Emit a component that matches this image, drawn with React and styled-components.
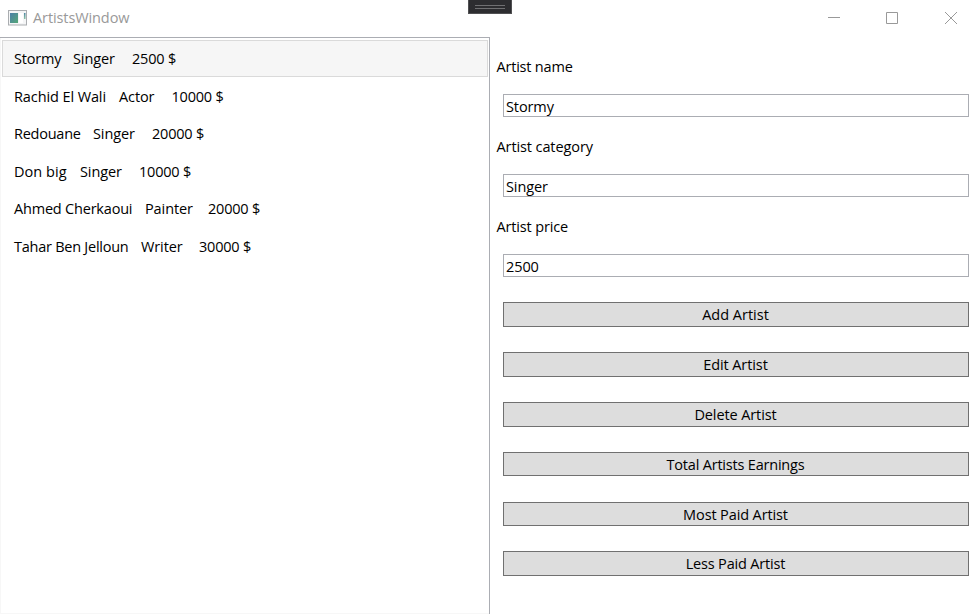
import React from 'react';
import styled, { createGlobalStyle } from 'styled-components';

const GlobalStyle = createGlobalStyle`
  * { box-sizing: border-box; }
  body { margin: 0; background: #fff; overflow: hidden; }
`;

const Window = styled.div`
  display: flex;
  flex-direction: column;
  position: relative;
  width: 980px;
  height: 614px;
  overflow: hidden;
  background: #fff;
  color: #000;
  font: 14.5px/20px "Open Sans", "Noto Sans", sans-serif;
  white-space: pre;
`;

const TitleBar = styled.header`
  display: flex;
  align-items: center;
  height: 37px;
  flex: none;
  padding: 0 23px 1px 8px;
  color: #999;
`;

const Title = styled.span`
  flex: 1;
  margin-left: 6px;
  letter-spacing: ${(p) => p.$tracking}px;
`;

const Controls = styled.div`
  display: flex;
  gap: 46px;
`;

const ControlIcon = styled.svg`
  display: block;
  width: ${(p) => p.$width || 12}px;
  height: 12px;
`;

const DebugHandle = styled.div`
  position: absolute;
  left: 468px;
  top: 0;
  width: 44px;
  height: 14px;
  padding: 5px 6px 0;
  background: #2d2d30;
  border: solid #505052;
  border-width: 0 1px 1px;
`;

const Grip = styled.div`
  height: 4px;
  border: solid #707072;
  border-width: 1px 0;
`;

const Content = styled.main`
  display: flex;
  flex: 1;
  min-height: 0;
`;

const ArtistList = styled.ul`
  width: 490px;
  margin: 0;
  padding: 2px 1px;
  list-style: none;
  border: solid #abadb3;
  border-width: 1px 1px 0 0;
  box-shadow: inset 1px 0 #f7f7f7, inset 0 -1px #f7f7f7;
`;

const ArtistRow = styled.li`
  display: flex;
  align-items: center;
  height: 37px;
  margin: 0 0 0.5px 1px;
  padding: 1.5px 11px 0;
  border: 1px solid ${(p) => (p.$selected ? '#dadada' : 'transparent')};
  background: ${(p) => (p.$selected ? '#f6f6f6' : 'transparent')};
`;

const Cell = styled.span`
  width: ${(p) => p.$width}px;
  flex: none;
  letter-spacing: ${(p) => p.$tracking}px;
`;

const Form = styled.form`
  flex: 1;
  padding: 19px 11px 0 6.5px;
`;

const Field = styled.label`
  display: block;
  height: 80px;
`;

const Caption = styled.span`
  display: block;
  padding-top: 1px;
  letter-spacing: ${(p) => p.$tracking}px;
`;

const TextBox = styled.input`
  display: block;
  width: 466px;
  height: 23px;
  margin: 17px 0 0 6.5px;
  padding: 1px 2px 0;
  border: 1px solid #abadb3;
  border-radius: 0;
  outline: 0;
  background: #fff;
  color: #000;
  font: inherit;
  letter-spacing: ${(p) => p.$tracking}px;
`;

const Actions = styled.div`
  display: flex;
  flex-direction: column;
  gap: 25.1px;
  margin: 6px 0 0 6.5px;
`;

const ActionButton = styled.button`
  height: 24.8px;
  width: 466px;
  padding: 1.2px 1px 0 0;
  border: 1px solid #707070;
  border-radius: 0;
  background: #ddd;
  color: #000;
  font: inherit;
  letter-spacing: ${(p) => p.$tracking}px;
`;

const artists = [
  { name: 'Stormy', category: 'Singer', price: '2500 $', widths: [59, 59], tracking: -0.2 },
  { name: 'Rachid El Wali', category: 'Actor', price: '10000 $', widths: [105, 52.5], tracking: -0.1 },
  { name: 'Redouane', category: 'Singer', price: '20000 $', widths: [79, 59], tracking: -0.25 },
  { name: 'Don big', category: 'Singer', price: '10000 $', widths: [66, 59], tracking: 0.05 },
  { name: 'Ahmed Cherkaoui', category: 'Painter', price: '20000 $', widths: [131, 63], tracking: -0.2 },
  { name: 'Tahar Ben Jelloun', category: 'Writer', price: '30000 $', widths: [127, 58], tracking: -0.25 },
];

const fields = [
  { label: 'Artist name', value: 'Stormy', tracking: -0.2 },
  { label: 'Artist category', value: 'Singer', tracking: -0.1 },
  { label: 'Artist price', value: '2500', tracking: -0.15 },
];

const actions = [
  { label: 'Add Artist', tracking: 0 },
  { label: 'Edit Artist', tracking: -0.1 },
  { label: 'Delete Artist', tracking: -0.1 },
  { label: 'Total Artists Earnings', tracking: -0.2 },
  { label: 'Most Paid Artist', tracking: -0.12 },
  { label: 'Less Paid Artist', tracking: -0.17 },
];

const AppIcon = () => (
  <svg width="19" height="16" viewBox="0 0 19 16">
    <defs>
      <linearGradient id="screen" x1="0" y1="0" x2="1" y2="1">
        <stop offset="0" stopColor="#4b7fa8" />
        <stop offset="1" stopColor="#55a777" />
      </linearGradient>
      <linearGradient id="bar" x1="0" y1="0" x2="0" y2="1">
        <stop offset="0" stopColor="#4f87a3" />
        <stop offset="1" stopColor="#8cc4a4" />
      </linearGradient>
    </defs>
    <rect x="0.5" y="0.5" width="18" height="14.5" fill="#f4f5f6" stroke="#aaadb0" />
    <rect x="2" y="3" width="8" height="10" fill="url(#screen)" />
    <rect x="11" y="3" width="4" height="10" fill="#fff" />
    <rect x="16" y="3" width="1.5" height="6" fill="url(#bar)" />
  </svg>
);

export default function App() {
  return (
    <Window>
      <GlobalStyle />
      <TitleBar>
        <AppIcon />
        <Title $tracking={-0.1}>ArtistsWindow</Title>
        <Controls>
          <ControlIcon><path d="M0 5.5H12" stroke="#999" /></ControlIcon>
          <ControlIcon $width={13}><path d="M.5.5H11.5V11.5H.5Z" fill="none" stroke="#999" /></ControlIcon>
          <ControlIcon><path d="M0 0L12 12M12 0L0 12" stroke="#999" /></ControlIcon>
        </Controls>
      </TitleBar>
      <DebugHandle><Grip /></DebugHandle>
      <Content>
        <ArtistList>
          {artists.map((a, i) => (
            <ArtistRow key={a.name} $selected={i === 0}>
              <Cell $width={a.widths[0]} $tracking={a.tracking}>{a.name}</Cell>
              <Cell $width={a.widths[1]} $tracking={-0.1}>{a.category}</Cell>
              <Cell $tracking={-0.2}>{a.price}</Cell>
            </ArtistRow>
          ))}
        </ArtistList>
        <Form>
          {fields.map((f) => (
            <Field key={f.label}>
              <Caption $tracking={f.tracking}>{f.label}</Caption>
              <TextBox $tracking={-0.1} defaultValue={f.value} />
            </Field>
          ))}
          <Actions>
            {actions.map((a) => (
              <ActionButton key={a.label} type="button" $tracking={a.tracking}>{a.label}</ActionButton>
            ))}
          </Actions>
        </Form>
      </Content>
    </Window>
  );
}
